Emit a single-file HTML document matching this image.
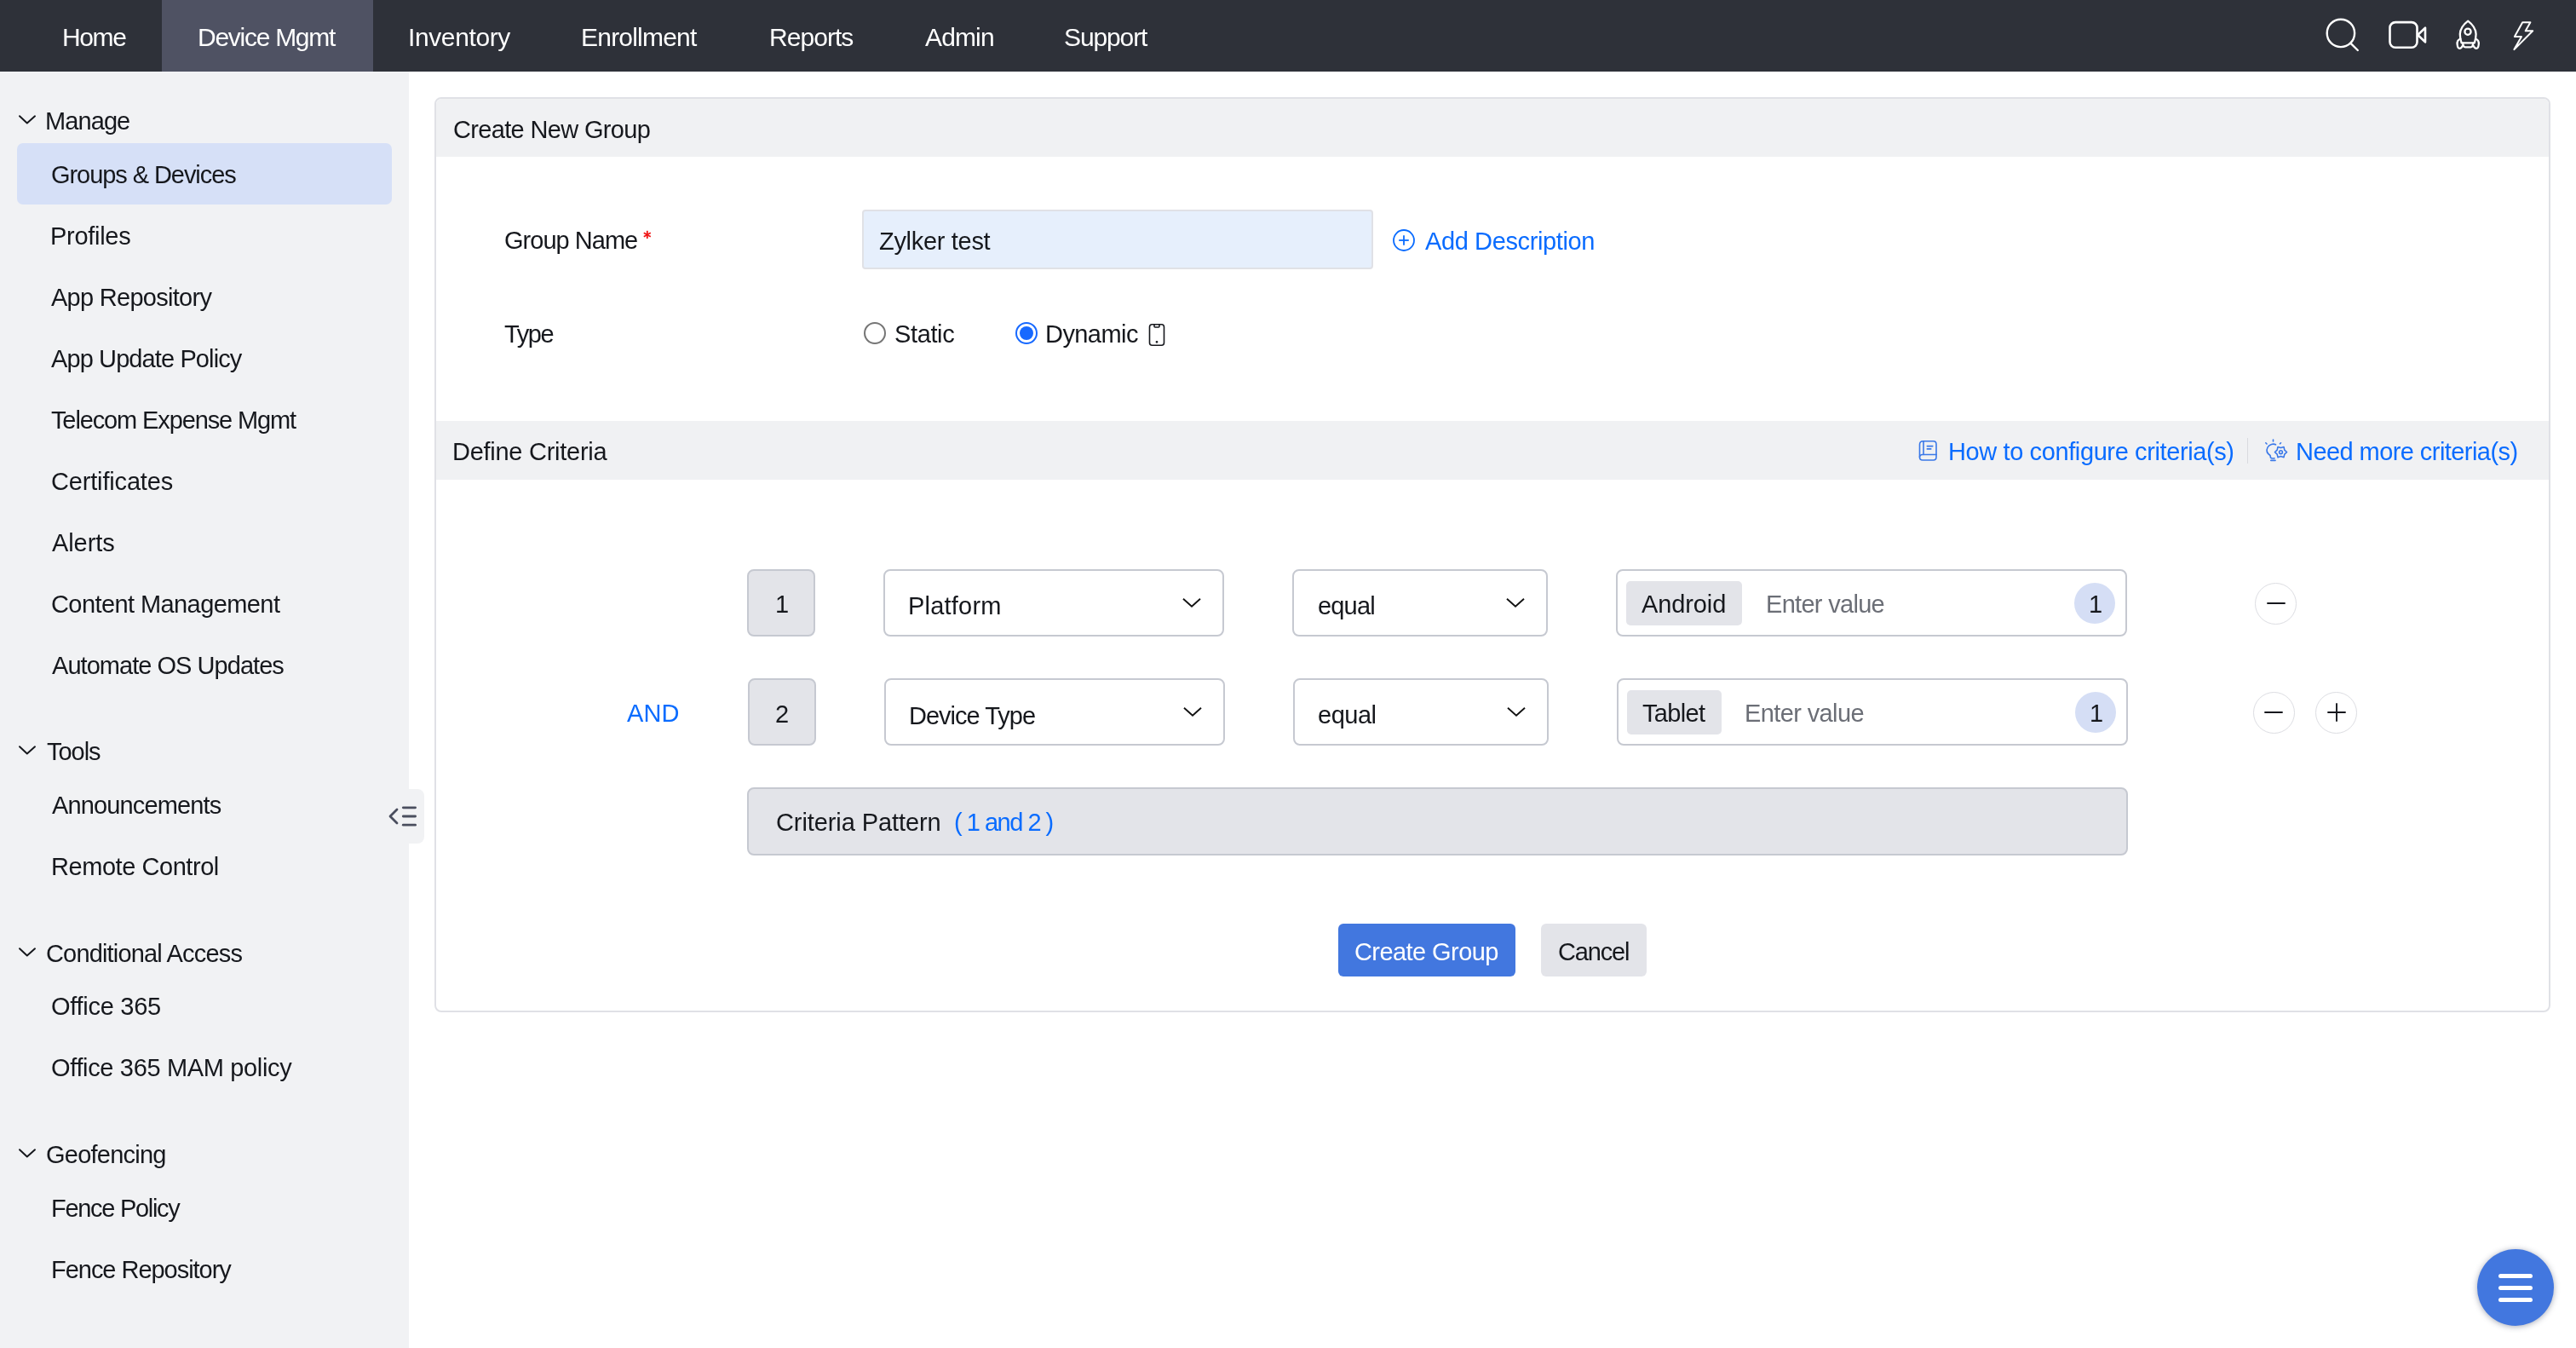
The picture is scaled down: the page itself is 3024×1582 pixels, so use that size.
<!DOCTYPE html>
<html><head><meta charset="utf-8"><title>Create New Group</title>
<style>
html,body{margin:0;padding:0;width:3024px;height:1582px;overflow:hidden;background:#ffffff;position:relative}
body{font-family:"Liberation Sans",sans-serif}
.t{position:absolute;white-space:pre;line-height:40px;font-family:"Liberation Sans",sans-serif;will-change:transform}
</style></head><body>
<div style="position:absolute;left:0px;top:0px;width:3024px;height:84px;box-sizing:border-box;background:#2e3139"></div>
<div style="position:absolute;left:190px;top:0px;width:248px;height:84px;box-sizing:border-box;background:#4f5263"></div>
<div class="t" style="left:72.70px;top:24.00px;font-size:30px;color:#ffffff;letter-spacing:-1.380px;">Home</div>
<div class="t" style="left:232.00px;top:24.00px;font-size:30px;color:#ffffff;letter-spacing:-1.270px;">Device Mgmt</div>
<div class="t" style="left:478.70px;top:24.00px;font-size:30px;color:#ffffff;letter-spacing:-0.387px;">Inventory</div>
<div class="t" style="left:682.00px;top:24.00px;font-size:30px;color:#ffffff;letter-spacing:-0.784px;">Enrollment</div>
<div class="t" style="left:902.70px;top:24.00px;font-size:30px;color:#ffffff;letter-spacing:-0.957px;">Reports</div>
<div class="t" style="left:1085.60px;top:24.00px;font-size:30px;color:#ffffff;letter-spacing:-0.862px;">Admin</div>
<div class="t" style="left:1249.00px;top:24.00px;font-size:30px;color:#ffffff;letter-spacing:-1.123px;">Support</div>
<svg style="position:absolute;left:2700px;top:0" width="324" height="84" viewBox="2700 0 324 84" fill="none" stroke="#fff" stroke-width="2.4" stroke-linecap="round" stroke-linejoin="round">
<circle cx="2747.9" cy="38.9" r="16.2"/><line x1="2759.8" y1="51.2" x2="2767.8" y2="59"/>
<rect x="2805.5" y="26.1" width="32" height="29.7" rx="6.5" stroke-width="2.6"/><path d="M2838.3 41 L2847 32.6 L2847 49.4 Z" stroke-width="2.6"/>
<path d="M2897.2 24.6 C2892 28.5 2888 33.5 2887.8 40 C2887.8 44 2888.6 47.5 2889.6 50.4 L2904.8 50.4 C2905.8 47.5 2906.6 44 2906.6 40 C2906.4 33.5 2902.4 28.5 2897.2 24.6 Z" stroke-width="2.3"/>
<circle cx="2897" cy="37.2" r="3.6" stroke-width="2.3"/>
<path d="M2891 50.6 L2891.8 53.5 Q2892.3 55.3 2894 55.3 L2900.4 55.3 Q2902.1 55.3 2902.6 53.5 L2903.4 50.6" stroke-width="2.3"/>
<path d="M2888.4 45.5 C2885.5 46.5 2884.3 49 2884.6 52 C2884.9 55 2885.6 56.8 2887.3 56.8 C2888.9 56.8 2890 55.5 2891 53.5" stroke-width="2.3"/>
<path d="M2906 45.5 C2908.9 46.5 2910.1 49 2909.8 52 C2909.5 55 2908.8 56.8 2907.1 56.8 C2905.5 56.8 2904.4 55.5 2903.4 53.5" stroke-width="2.3"/>
<path d="M2961.2 26.3 L2970.4 26.3 L2964.7 36.3 L2973.2 36.3 L2951.4 58.1 L2960 43 L2951.9 43 Z" stroke-width="2"/>
</svg>
<div style="position:absolute;left:0px;top:84px;width:480px;height:1498px;box-sizing:border-box;background:#f1f2f4"></div>
<div style="position:absolute;left:20px;top:168px;width:440px;height:72px;box-sizing:border-box;background:#d6e0f7;border-radius:7px"></div>
<svg style="position:absolute;left:16px;top:129.3px" width="32" height="22" viewBox="16 129.3 32 22" fill="none" stroke="#16181d" stroke-width="2" stroke-linecap="round" stroke-linejoin="round"><path d="M23 136.60000000000002 L31.8 144.8 L41 136.60000000000002"/></svg>
<div class="t" style="left:53.30px;top:122.30px;font-size:29px;color:#16181d;letter-spacing:-0.914px;">Manage</div>
<div class="t" style="left:59.75px;top:184.50px;font-size:29px;color:#16181d;letter-spacing:-1.063px;">Groups &amp; Devices</div>
<div class="t" style="left:59.00px;top:257.00px;font-size:29px;color:#16181d;letter-spacing:-0.286px;">Profiles</div>
<div class="t" style="left:60.00px;top:329.20px;font-size:29px;color:#16181d;letter-spacing:-0.721px;">App Repository</div>
<div class="t" style="left:60.00px;top:401.30px;font-size:29px;color:#16181d;letter-spacing:-0.893px;">App Update Policy</div>
<div class="t" style="left:60.00px;top:473.40px;font-size:29px;color:#16181d;letter-spacing:-1.126px;">Telecom Expense Mgmt</div>
<div class="t" style="left:59.60px;top:545.10px;font-size:29px;color:#16181d;letter-spacing:-0.167px;">Certificates</div>
<div class="t" style="left:60.60px;top:617.20px;font-size:29px;color:#16181d;letter-spacing:-0.086px;">Alerts</div>
<div class="t" style="left:59.60px;top:689.00px;font-size:29px;color:#16181d;letter-spacing:-0.585px;">Content Management</div>
<div class="t" style="left:60.60px;top:760.80px;font-size:29px;color:#16181d;letter-spacing:-0.964px;">Automate OS Updates</div>
<svg style="position:absolute;left:16px;top:869px" width="32" height="22" viewBox="16 869 32 22" fill="none" stroke="#16181d" stroke-width="2" stroke-linecap="round" stroke-linejoin="round"><path d="M23 876.3 L31.8 884.5 L41 876.3"/></svg>
<div class="t" style="left:54.50px;top:862.00px;font-size:29px;color:#16181d;letter-spacing:-1.025px;">Tools</div>
<div class="t" style="left:60.70px;top:924.50px;font-size:29px;color:#16181d;letter-spacing:-0.865px;">Announcements</div>
<div class="t" style="left:59.70px;top:996.50px;font-size:29px;color:#16181d;letter-spacing:-0.449px;">Remote Control</div>
<svg style="position:absolute;left:16px;top:1105.5px" width="32" height="22" viewBox="16 1105.5 32 22" fill="none" stroke="#16181d" stroke-width="2" stroke-linecap="round" stroke-linejoin="round"><path d="M23 1112.8 L31.8 1121.0 L41 1112.8"/></svg>
<div class="t" style="left:54.00px;top:1098.50px;font-size:29px;color:#16181d;letter-spacing:-0.831px;">Conditional Access</div>
<div class="t" style="left:60.00px;top:1161.00px;font-size:29px;color:#16181d;letter-spacing:-0.281px;">Office 365</div>
<div class="t" style="left:60.00px;top:1233.20px;font-size:29px;color:#16181d;letter-spacing:-0.344px;">Office 365 MAM policy</div>
<svg style="position:absolute;left:16px;top:1341.5px" width="32" height="22" viewBox="16 1341.5 32 22" fill="none" stroke="#16181d" stroke-width="2" stroke-linecap="round" stroke-linejoin="round"><path d="M23 1348.8 L31.8 1357.0 L41 1348.8"/></svg>
<div class="t" style="left:54.00px;top:1334.50px;font-size:29px;color:#16181d;letter-spacing:-0.767px;">Geofencing</div>
<div class="t" style="left:59.70px;top:1397.50px;font-size:29px;color:#16181d;letter-spacing:-1.292px;">Fence Policy</div>
<div class="t" style="left:59.70px;top:1469.50px;font-size:29px;color:#16181d;letter-spacing:-1.031px;">Fence Repository</div>
<div style="position:absolute;left:440px;top:926px;width:58px;height:64px;box-sizing:border-box;background:#f1f2f4;border-radius:0 8px 8px 0"></div>
<svg style="position:absolute;left:450px;top:940px" width="48" height="36" viewBox="450 940 48 36" fill="none" stroke="#4a4e5e" stroke-width="2.8" stroke-linecap="round" stroke-linejoin="round">
<path d="M466 950 L458 958 L466 966"/><line x1="473.3" y1="947.8" x2="487.6" y2="947.8"/><line x1="473.3" y1="958" x2="487.6" y2="958"/><line x1="473.3" y1="968.2" x2="487.6" y2="968.2"/></svg>
<div style="position:absolute;left:510px;top:114px;width:2484px;height:1074px;box-sizing:border-box;background:#fff;border:2px solid #e0e1e6;border-radius:8px"></div>
<div style="position:absolute;left:512px;top:116px;width:2480px;height:68px;box-sizing:border-box;background:#f0f1f3;border-radius:6px 6px 0 0"></div>
<div class="t" style="left:531.70px;top:132.00px;font-size:29px;color:#16181d;letter-spacing:-0.663px;">Create New Group</div>
<div class="t" style="left:591.90px;top:262.00px;font-size:29px;color:#16181d;letter-spacing:-0.976px;">Group Name</div>
<svg style="position:absolute;left:750px;top:265px" width="20" height="20" viewBox="750 265 20 20" fill="none" stroke="#f01414" stroke-width="1.8" stroke-linecap="butt"><line x1="759.8" y1="270.8" x2="759.8" y2="280"/><line x1="755.8" y1="273.2" x2="763.8" y2="277.8"/><line x1="755.8" y1="277.8" x2="763.8" y2="273.2"/></svg>
<div style="position:absolute;left:1012px;top:246px;width:600px;height:70px;box-sizing:border-box;background:#e6effc;border:2px solid #e0e1e6;border-radius:4px"></div>
<div class="t" style="left:1032.40px;top:262.90px;font-size:29px;color:#16181d;letter-spacing:-0.309px;">Zylker test</div>
<svg style="position:absolute;left:1630px;top:263.5px" width="36" height="36" viewBox="0 0 36 36" fill="none" stroke="#0a6cff" stroke-width="1.8" stroke-linecap="butt"><circle cx="18" cy="18" r="12"/><line x1="18" y1="12.2" x2="18" y2="23.8"/><line x1="12.2" y1="18" x2="23.8" y2="18"/></svg>
<div class="t" style="left:1672.50px;top:262.90px;font-size:29px;color:#0a6cff;letter-spacing:-0.385px;">Add Description</div>
<div class="t" style="left:592.00px;top:371.80px;font-size:29px;color:#16181d;letter-spacing:-1.414px;">Type</div>
<div style="position:absolute;left:1014px;top:378px;width:26px;height:26px;box-sizing:border-box;border:2px solid #767676;border-radius:50%"></div>
<div class="t" style="left:1049.60px;top:372.00px;font-size:29px;color:#16181d;letter-spacing:-0.366px;">Static</div>
<div style="position:absolute;left:1192px;top:378px;width:26px;height:26px;box-sizing:border-box;border:2.5px solid #1769ff;border-radius:50%"></div>
<div style="position:absolute;left:1197px;top:383px;width:16px;height:16px;background:#1769ff;border-radius:50%"></div>
<div class="t" style="left:1227.40px;top:372.00px;font-size:29px;color:#16181d;letter-spacing:-0.567px;">Dynamic</div>
<svg style="position:absolute;left:1346px;top:378px" width="24" height="30" viewBox="0 0 24 30" fill="none" stroke="#16181d" stroke-width="1.6" stroke-linecap="round" stroke-linejoin="round"><rect x="3.5" y="2.8" width="17" height="24.5" rx="3"/><path d="M9 3 L9 5 Q9 6 10 6 L14 6 Q15 6 15 5 L15 3"/><circle cx="12" cy="23.3" r="0.6" fill="#16181d"/></svg>
<div style="position:absolute;left:512px;top:494px;width:2480px;height:69px;box-sizing:border-box;background:#f0f1f3"></div>
<div class="t" style="left:531.20px;top:510.30px;font-size:29px;color:#16181d;letter-spacing:-0.265px;">Define Criteria</div>
<svg style="position:absolute;left:2248px;top:512px" width="30" height="34" viewBox="2248 512 30 34" fill="none" stroke="#3a78e8" stroke-width="1.6" stroke-linecap="round" stroke-linejoin="round">
<path d="M2257.5 517.8 L2269.5 517.8 Q2273 517.8 2273 521.3 L2273 536.5 Q2273 540 2269.5 540 L2257 540 Q2253.5 540 2253.5 536.5 L2253.5 521.8 Q2253.5 517.8 2257.5 517.8 Z"/>
<line x1="2258" y1="518" x2="2258" y2="533.5"/><path d="M2273 533.5 L2257 533.5 Q2253.5 533.5 2253.5 536.5"/>
<line x1="2262.3" y1="523.6" x2="2268.8" y2="523.6"/><line x1="2262.3" y1="526.9" x2="2266.8" y2="526.9"/></svg>
<div class="t" style="left:2286.60px;top:509.50px;font-size:29px;color:#0a6cff;letter-spacing:-0.390px;">How to configure criteria(s)</div>
<div style="position:absolute;left:2637.8px;top:514px;width:1.3999999999996362px;height:30px;box-sizing:border-box;background:#d9dadf"></div>
<svg style="position:absolute;left:2652px;top:510px" width="40" height="36" viewBox="2652 510 40 36" fill="none" stroke="#3a78e8" stroke-width="1.6" stroke-linecap="round" stroke-linejoin="round">
<path d="M2671.5 521.8 C2669 520.5 2664 521 2662 525 C2660 529 2662 532.5 2665 534.5 L2665.5 537 Q2666.5 538.5 2670 537.8"/>
<line x1="2665.8" y1="540.4" x2="2671" y2="540.4"/>
<line x1="2668.5" y1="516" x2="2668.5" y2="518"/><line x1="2659.8" y1="519.8" x2="2661" y2="521"/><line x1="2676.5" y1="520.8" x2="2677.5" y2="519.8"/>
<path d="M2684.50 530.60 L2681.83 533.10 L2681.00 536.66 L2677.50 535.60 L2674.00 536.66 L2673.17 533.10 L2670.50 530.60 L2673.17 528.10 L2674.00 524.54 L2677.50 525.60 L2681.00 524.54 L2681.83 528.10 Z"/>
<circle cx="2677.5" cy="530.7" r="1.9"/></svg>
<div class="t" style="left:2695.00px;top:509.50px;font-size:29px;color:#0a6cff;letter-spacing:-0.564px;">Need more criteria(s)</div>
<div style="position:absolute;left:877px;top:668px;width:80px;height:79px;box-sizing:border-box;background:#e3e4e9;border:2px solid #c6c9d1;border-radius:8px"></div>
<div class="t" style="left:909.80px;top:689.20px;font-size:29px;color:#16181d;">1</div>
<div style="position:absolute;left:1037px;top:668px;width:400px;height:79px;box-sizing:border-box;background:#fff;border:2px solid #c6c9d1;border-radius:8px"></div>
<div class="t" style="left:1066.30px;top:691.40px;font-size:29px;color:#16181d;letter-spacing:0.212px;">Platform</div>
<svg style="position:absolute;left:1385px;top:698.3px" width="28" height="18" viewBox="1385 698.3 28 18" fill="none" stroke="#111" stroke-width="1.9" stroke-linecap="butt" stroke-linejoin="miter"><path d="M1389 703.0 L1399 712.0999999999999 L1409 703.0"/></svg>
<div style="position:absolute;left:1517px;top:668px;width:300px;height:79px;box-sizing:border-box;background:#fff;border:2px solid #c6c9d1;border-radius:8px"></div>
<div class="t" style="left:1546.70px;top:690.50px;font-size:29px;color:#16181d;letter-spacing:-0.828px;">equal</div>
<svg style="position:absolute;left:1765px;top:698.3px" width="28" height="18" viewBox="1765 698.3 28 18" fill="none" stroke="#111" stroke-width="1.9" stroke-linecap="butt" stroke-linejoin="miter"><path d="M1769 703.0 L1779 712.0999999999999 L1789 703.0"/></svg>
<div style="position:absolute;left:1897px;top:668px;width:600px;height:79px;box-sizing:border-box;background:#fff;border:2px solid #c6c9d1;border-radius:8px"></div>
<div style="position:absolute;left:1909px;top:682px;width:136px;height:52px;box-sizing:border-box;background:#e3e4e9;border-radius:5px"></div>
<div class="t" style="left:1927.40px;top:689.00px;font-size:29px;color:#16181d;letter-spacing:-0.105px;">Android</div>
<div class="t" style="left:2072.80px;top:688.80px;font-size:29px;color:#6b6e76;letter-spacing:-0.697px;">Enter value</div>
<div style="position:absolute;left:2435px;top:684px;width:48px;height:48px;border-radius:50%;background:#d5def5"></div>
<div class="t" style="left:2452.00px;top:688.80px;font-size:29px;color:#16181d;">1</div>
<div style="position:absolute;left:2647.0px;top:683.5px;width:49px;height:49px;box-sizing:border-box;border:1.8px solid #dcdde2;border-radius:50%"></div>
<svg style="position:absolute;left:2651.5px;top:688px" width="40" height="40" viewBox="2651.5 688 40 40" fill="none" stroke="#16181d" stroke-width="1.9" stroke-linecap="round"><line x1="2661.5" y1="708" x2="2681.5" y2="708"/></svg>
<div class="t" style="left:736.10px;top:817.10px;font-size:29px;color:#0a6cff;letter-spacing:0.157px;">AND</div>
<div style="position:absolute;left:878px;top:796px;width:80px;height:79px;box-sizing:border-box;background:#e3e4e9;border:2px solid #c6c9d1;border-radius:8px"></div>
<div class="t" style="left:909.80px;top:817.90px;font-size:29px;color:#16181d;">2</div>
<div style="position:absolute;left:1038px;top:796px;width:400px;height:79px;box-sizing:border-box;background:#fff;border:2px solid #c6c9d1;border-radius:8px"></div>
<div class="t" style="left:1067.20px;top:819.50px;font-size:29px;color:#16181d;letter-spacing:-1.004px;">Device Type</div>
<svg style="position:absolute;left:1386px;top:826.3px" width="28" height="18" viewBox="1386 826.3 28 18" fill="none" stroke="#111" stroke-width="1.9" stroke-linecap="butt" stroke-linejoin="miter"><path d="M1390 831.0 L1400 840.0999999999999 L1410 831.0"/></svg>
<div style="position:absolute;left:1518px;top:796px;width:300px;height:79px;box-sizing:border-box;background:#fff;border:2px solid #c6c9d1;border-radius:8px"></div>
<div class="t" style="left:1546.80px;top:818.50px;font-size:29px;color:#16181d;letter-spacing:-0.503px;">equal</div>
<svg style="position:absolute;left:1766px;top:826.3px" width="28" height="18" viewBox="1766 826.3 28 18" fill="none" stroke="#111" stroke-width="1.9" stroke-linecap="butt" stroke-linejoin="miter"><path d="M1770 831.0 L1780 840.0999999999999 L1790 831.0"/></svg>
<div style="position:absolute;left:1898px;top:796px;width:600px;height:79px;box-sizing:border-box;background:#fff;border:2px solid #c6c9d1;border-radius:8px"></div>
<div style="position:absolute;left:1910px;top:810px;width:111px;height:52px;box-sizing:border-box;background:#e3e4e9;border-radius:5px"></div>
<div class="t" style="left:1928.00px;top:817.00px;font-size:29px;color:#16181d;letter-spacing:-0.666px;">Tablet</div>
<div class="t" style="left:2047.60px;top:816.80px;font-size:29px;color:#6b6e76;letter-spacing:-0.617px;">Enter value</div>
<div style="position:absolute;left:2436px;top:812px;width:48px;height:48px;border-radius:50%;background:#d5def5"></div>
<div class="t" style="left:2453.00px;top:816.80px;font-size:29px;color:#16181d;">1</div>
<div style="position:absolute;left:2644.5px;top:811.5px;width:49px;height:49px;box-sizing:border-box;border:1.8px solid #dcdde2;border-radius:50%"></div>
<svg style="position:absolute;left:2649px;top:816px" width="40" height="40" viewBox="2649 816 40 40" fill="none" stroke="#16181d" stroke-width="1.9" stroke-linecap="round"><line x1="2659" y1="836" x2="2679" y2="836"/></svg>
<div style="position:absolute;left:2718.2px;top:811.5px;width:49px;height:49px;box-sizing:border-box;border:1.8px solid #dcdde2;border-radius:50%"></div>
<svg style="position:absolute;left:2722.7px;top:816px" width="40" height="40" viewBox="2722.7 816 40 40" fill="none" stroke="#16181d" stroke-width="1.9" stroke-linecap="round"><line x1="2732.7" y1="836" x2="2752.7" y2="836"/><line x1="2742.7" y1="826" x2="2742.7" y2="846"/></svg>
<div style="position:absolute;left:877px;top:924px;width:1621px;height:80px;box-sizing:border-box;background:#e3e4e9;border:2px solid #c6c9d1;border-radius:8px"></div>
<div class="t" style="left:911.00px;top:945.00px;font-size:29px;color:#16181d;letter-spacing:-0.086px;">Criteria Pattern</div>
<div class="t" style="left:1120.00px;top:945.00px;font-size:29px;color:#0a6cff;letter-spacing:-1.493px;">( 1 and 2 )</div>
<div style="position:absolute;left:1571px;top:1084px;width:208px;height:62px;box-sizing:border-box;background:#4277df;border-radius:6px"></div>
<div class="t" style="left:1590.40px;top:1096.60px;font-size:29px;color:#ffffff;letter-spacing:-0.570px;">Create Group</div>
<div style="position:absolute;left:1809px;top:1084px;width:124px;height:62px;box-sizing:border-box;background:#e3e4e9;border-radius:6px"></div>
<div class="t" style="left:1829.00px;top:1096.60px;font-size:29px;color:#16181d;letter-spacing:-1.166px;">Cancel</div>
<div style="position:absolute;left:2908px;top:1466px;width:90px;height:90px;border-radius:50%;background:#4277df;box-shadow:0 1px 7px rgba(40,50,80,0.42)"></div>
<svg style="position:absolute;left:2920px;top:1480px" width="66" height="62" viewBox="2920 1480 66 62" fill="none" stroke="#fff" stroke-width="5" stroke-linecap="round"><line x1="2935.5" y1="1497.4" x2="2970.5" y2="1497.4"/><line x1="2935.5" y1="1511.4" x2="2970.5" y2="1511.4"/><line x1="2935.5" y1="1525.5" x2="2970.5" y2="1525.5"/></svg>
</body></html>
